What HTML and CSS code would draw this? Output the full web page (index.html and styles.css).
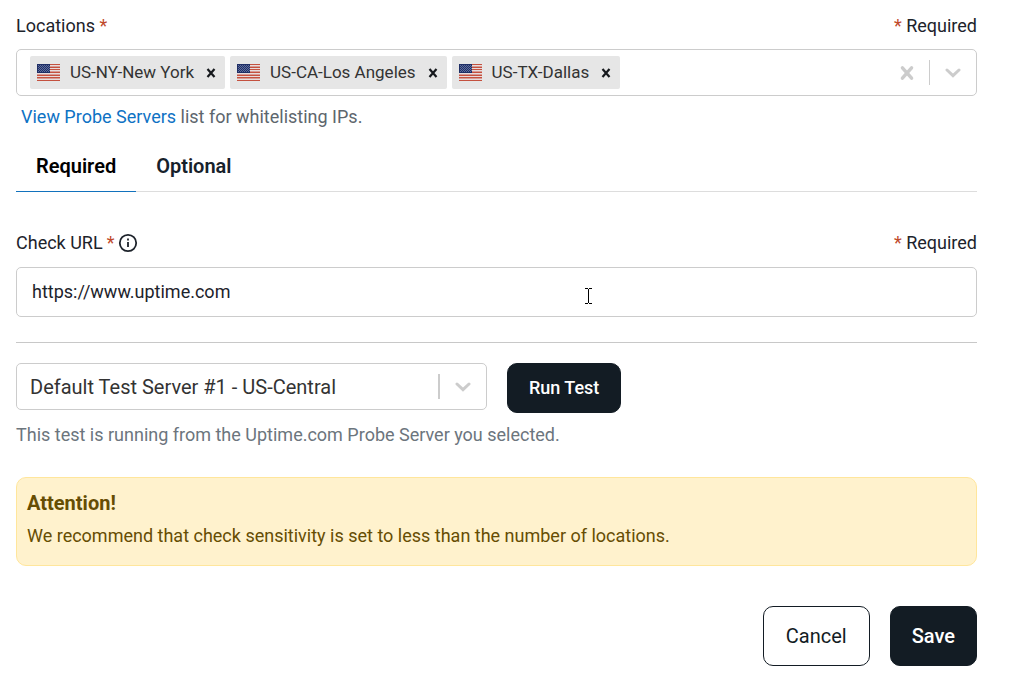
FILE: index.html
```
<!DOCTYPE html>
<html lang="en">
<head>
    <meta charset="UTF-8">
    <meta name="viewport" content="width=device-width, initial-scale=1.0">
    <title>Uptime.com - Check settings</title>
    <link rel="stylesheet" href="styles.css">
</head>
<body>
    <svg class="sprite" aria-hidden="true">
        <symbol id="flag-us" viewBox="0 0 23 17">
            <rect width="23" height="17" fill="#e6dcdc"/>
            <path d="M0 .5h23M0 3.5h23M0 5.5h23M0 8.5h23M0 11.5h23M0 13.5h23M0 16.5h23" stroke="#c4513f"/>
            <path d="M13 2.5h10M13 7.5h10M0 10.5h23M0 14.5h23" stroke="#d99a93"/>
            <rect width="13" height="9" fill="#1f2f66"/>
            <path d="M1 1.5h12M2 2.5h11M1 3.5h12M2 4.5h11M1 5.5h12M2 6.5h11M1 7.5h12" stroke="#5e6d9c" stroke-dasharray="1 1"/>
        </symbol>
        <symbol id="remove" viewBox="0 0 10 10">
            <path d="M1.5 1l7 8M8.5 1l-7 8" stroke="currentColor" stroke-width="2.2"/>
        </symbol>
        <symbol id="chevron" viewBox="0 0 16 10">
            <path d="M2 2l6 5.6L14 2" fill="none" stroke="currentColor" stroke-width="3" stroke-linecap="round"/>
        </symbol>
    </svg>

    <form class="check-form">
        <div class="label-row">
            <span id="locations-label">Locations <span class="star">*</span></span>
            <span><span class="star">*</span> Required</span>
        </div>
        <div class="multi-select" role="group" aria-labelledby="locations-label">
            <ul class="chips">
                <li class="chip">
                    <svg class="flag"><use href="#flag-us"/></svg>
                    <span class="chip-name">US-NY-New York</span>
                    <button type="button" class="chip-remove" aria-label="Remove US-NY-New York"><svg><use href="#remove"/></svg></button>
                </li>
                <li class="chip">
                    <svg class="flag"><use href="#flag-us"/></svg>
                    <span class="chip-name">US-CA-Los Angeles</span>
                    <button type="button" class="chip-remove" aria-label="Remove US-CA-Los Angeles"><svg><use href="#remove"/></svg></button>
                </li>
                <li class="chip">
                    <svg class="flag"><use href="#flag-us"/></svg>
                    <span class="chip-name">US-TX-Dallas</span>
                    <button type="button" class="chip-remove" aria-label="Remove US-TX-Dallas"><svg><use href="#remove"/></svg></button>
                </li>
            </ul>
            <button type="button" class="clear" aria-label="Clear all">
                <svg viewBox="0 0 12 14"><path d="M2 2.5l8 9M10 2.5l-8 9" stroke="currentColor" stroke-width="3" stroke-linecap="round"/></svg>
            </button>
            <span class="separator"></span>
            <button type="button" class="toggle" aria-label="Open locations"><svg><use href="#chevron"/></svg></button>
        </div>
        <p class="hint probe-hint"><a href="#">View Probe Servers</a> list for whitelisting IPs.</p>

        <div class="tabs" role="tablist">
            <button type="button" class="tab active" role="tab" aria-selected="true">Required</button>
            <button type="button" class="tab" role="tab" aria-selected="false">Optional</button>
        </div>

        <div class="label-row">
            <label for="check-url">Check URL <span class="star">*</span>
                <svg class="info" viewBox="0 0 20 20">
                    <circle cx="10" cy="10" r="8.2" fill="none" stroke="currentColor" stroke-width="1.8"/>
                    <path d="M10 9v5M10 5.6v2" stroke="currentColor" stroke-width="1.8"/>
                </svg>
            </label>
            <span><span class="star">*</span> Required</span>
        </div>
        <div class="url-field">
            <input type="text" id="check-url" class="url-input" value="https://www.uptime.com">
            <svg class="cursor" viewBox="0 0 7 16" aria-hidden="true">
                <path d="M0 .5h3M4 .5h3M3.5 1v14M0 15.5h3M4 15.5h3" stroke="#000"/>
            </svg>
        </div>

        <hr class="divider">

        <div class="test-row">
            <div class="select-wrap">
                <select id="test-server" class="test-select" aria-label="Test server" aria-describedby="test-hint">
                    <option>Default Test Server #1 - US-Central</option>
                </select>
                <span class="select-arrow">
                    <span class="separator thick"></span>
                    <svg><use href="#chevron"/></svg>
                </span>
            </div>
            <button type="button" class="btn btn-dark btn-test">Run Test</button>
        </div>
        <p class="hint test-hint" id="test-hint">This test is running from the Uptime.com Probe Server you selected.</p>

        <div class="alert" role="alert">
            <h4>Attention!</h4>
            <p>We recommend that check sensitivity is set to less than the number of locations.</p>
        </div>

        <div class="actions">
            <button type="button" class="btn">Cancel</button>
            <button type="submit" class="btn btn-dark">Save</button>
        </div>
    </form>
</body>
</html>
```
FILE: styles.css
```
* {
    padding: 0;
    margin: 0;
    box-sizing: border-box;
}
body {
    background: #fff;
    color: #1d232b;
    font-family: Roboto, "Liberation Sans", sans-serif;
    font-size: 18px;
    line-height: 24px;
}
button, input, select {
    font: inherit;
    color: inherit;
}
button {
    background: none;
    border: none;
    cursor: pointer;
}
svg {
    display: block;
}
.sprite {
    display: none;
}
.check-form {
    padding: 14px 44px 15px 16px;
}
.label-row {
    display: flex;
    justify-content: space-between;
    align-items: center;
}
.label-row label {
    display: flex;
    align-items: center;
    gap: 4px;
}
.star {
    color: #c0492b;
}
.info {
    width: 20px;
    height: 20px;
}

/* locations */
.multi-select {
    display: flex;
    align-items: center;
    min-height: 47px;
    margin-top: 11px;
    padding: 6px 15px 6px 13px;
    border: 1px solid #ccc;
    border-radius: 5px;
}
.chips {
    display: flex;
    flex: 1;
    flex-wrap: wrap;
    gap: 5px;
    list-style: none;
}
.chip {
    display: flex;
    align-items: center;
    height: 33px;
    padding: 0 9px 0 7px;
    background: #e6e6e6;
    border-radius: 2px;
    color: #333;
    font-size: 17px;
}
.chip-name {
    padding-bottom: 2px;
}
.flag {
    width: 23px;
    height: 17px;
    margin-right: 10px;
}
.chip-remove {
    margin-left: 12px;
    color: #16191d;
}
.chip-remove svg {
    width: 10px;
    height: 10px;
}
.clear, .toggle, .select-arrow {
    color: #ccc;
}
.clear svg {
    width: 14px;
    height: 16px;
}
.separator {
    width: 1px;
    height: 25px;
    margin: 0 15px;
    background: #ccc;
}
.thick {
    width: 2px;
}
.toggle svg, .select-arrow svg {
    width: 16px;
    height: 10px;
}
.hint {
    color: #5d666d;
}
.probe-hint {
    margin-top: 9px;
    padding-left: 5px;
}
a {
    color: #0e72c4;
    text-decoration: none;
}

/* tabs */
.tabs {
    display: flex;
    margin: 12px 0 39px;
    border-bottom: 1px solid #ddd;
}
.tab {
    padding: 13px 20px;
    margin-bottom: -1px;
    border-bottom: 1px solid transparent;
    color: #17212b;
    font-size: 20px;
    font-weight: 600;
}
.tab.active {
    color: #000;
    border-bottom-color: #1272bd;
}

/* check url */
.url-field {
    position: relative;
    margin-top: 12px;
}
.url-input {
    display: block;
    width: 100%;
    height: 50px;
    padding: 0 15px 2px;
    background: #fff;
    border: 1px solid #ccc;
    border-radius: 5px;
}
.cursor {
    position: absolute;
    left: 569px;
    top: 21px;
    width: 7px;
    height: 16px;
}
.divider {
    margin: 25px 0 20px;
    border: none;
    border-top: 1px solid #c8c8c8;
}

/* test server */
.test-row {
    display: flex;
    align-items: flex-start;
    gap: 20px;
}
.select-wrap {
    position: relative;
    width: 49%;
}
.test-select {
    display: block;
    width: 100%;
    height: 47px;
    padding: 0 60px 0 13px;
    appearance: none;
    background: #fff;
    border: 1px solid #ccc;
    border-radius: 5px;
    color: #333;
    font-size: 20px;
}
.select-arrow {
    position: absolute;
    top: 0;
    bottom: 0;
    right: 16px;
    display: flex;
    align-items: center;
    pointer-events: none;
}
.test-hint {
    margin-top: 10px;
    color: #6c757d;
}
.btn {
    height: 60px;
    padding: 0 22px;
    border: 1px solid #131c24;
    border-radius: 10px;
    font-size: 20px;
    color: #131c24;
}
.btn-dark {
    padding: 0 21px;
    background: #131c24;
    color: #fff;
    font-weight: 500;
}
.btn-test {
    height: 50px;
    font-size: 18px;
}

.alert {
    margin-top: 30px;
    padding: 13px 10px 17px;
    background: #fff2cd;
    border: 1px solid #ffe69c;
    border-radius: 10px;
    color: #664d03;
}
.alert h4 {
    margin-bottom: 9px;
    font-size: 20px;
}
.actions {
    display: flex;
    justify-content: flex-end;
    gap: 20px;
    margin-top: 40px;
}
```
